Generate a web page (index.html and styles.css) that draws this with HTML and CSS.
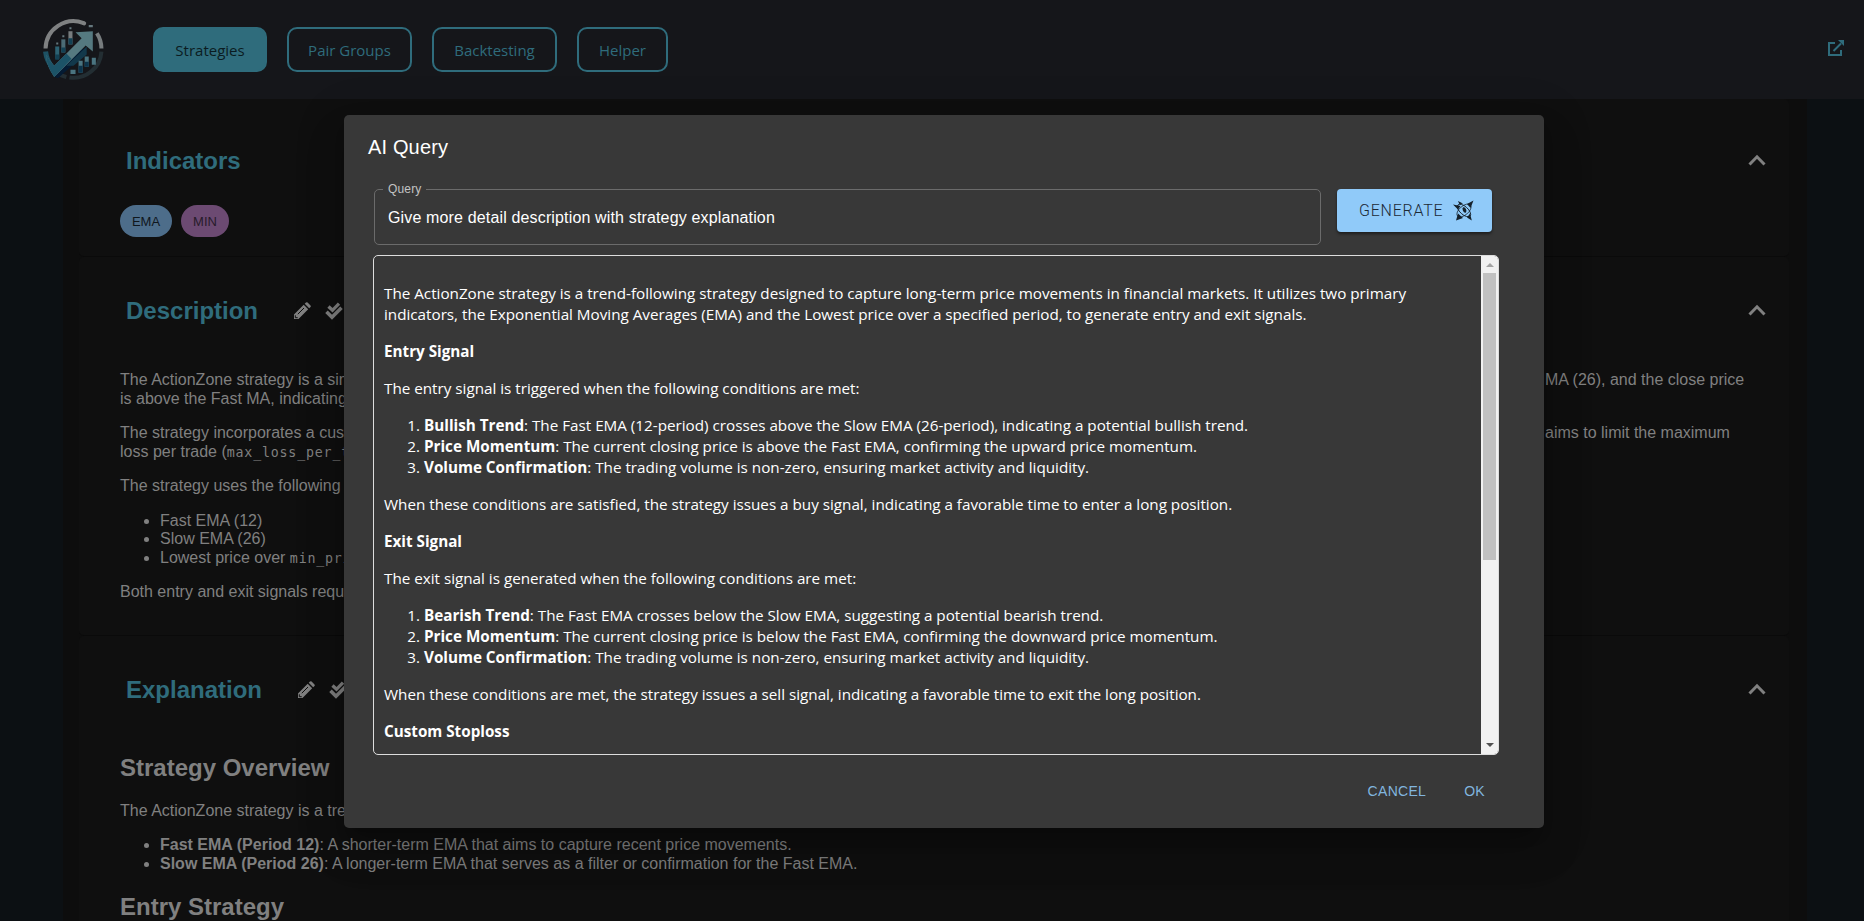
FILE: index.html
```html
<!DOCTYPE html>
<html lang="en">
<head>
<meta charset="utf-8">
<title>Strategies</title>
<link rel="stylesheet" href="styles.css">
</head>
<body>
<svg class="defs" width="0" height="0">
  <symbol id="chevron" viewBox="0 0 18 12"><path d="M1.500 10.500 9 2.800l7.500 7.700" fill="none" stroke="#808080" stroke-width="3"/></symbol>
  <symbol id="pencil" viewBox="0 0 18 18"><path fill="#808080" d="M1 12.500 10.700 2.800l4.500 4.500L5.500 17H1zM11.700 1.800l1.300-1.300q.8-.6 1.600 0l2.900 2.900q.6.800 0 1.600l-1.300 1.300z"/><path d="m4.800 12.200 6.200-6.200" stroke="#0f0f0f" stroke-width="1"/><path d="M2.300 13.300v2.400h2.400" fill="none" stroke="#0f0f0f" stroke-width="1"/></symbol>
  <symbol id="checks" viewBox="0 0 18 18"><path d="m3.500 4.500 4 3.800L14 1.700" fill="none" stroke="#808080" stroke-width="3.300"/><path d="m1.500 9.700 5.500 5.600 9.500-9.500" fill="none" stroke="#808080" stroke-width="3.500"/></symbol>
</svg>
<div class="app">
  <header class="topbar">
    <svg class="logo" viewBox="0 0 60 62">
      <g fill="none" stroke-width="4">
        <path d="M2.500 30A27.500 27.500 0 0 1 40 5" stroke="#7f8182"/>
        <path d="M40 5l.5.200" stroke="#7f8182" stroke-linecap="round"/>
        <path d="M53 15a27.500 27.500 0 0 1 4.500 15" stroke="#777c7e"/>
        <path d="M2.500 33q1 9 7 16" stroke="#1d5163" stroke-width="5"/>
        <path d="M57.500 33A27.500 27.500 0 0 1 26 58.500M23 58q-4-1-6-2" stroke="#232e33"/>
      </g>
      <path d="M12 28h4v12h-4z" fill="#2d6273"/><path d="M18 21h4v13h-4z" fill="#4b6b75"/><path d="M25 13h4v13h-4z" fill="#777c7e"/>
      <path d="M13 24h2v2h-2zM19 17h2v2h-2zM26 9h2v2h-2zM45 7h4v2h-4z" fill="#65777d"/>
      <path d="M12 36h4v5h-4zM18 29h4v5h-4zM25 20h4v6h-4z" fill="#134154"/>
      <path d="m12 55 27-25 4 4-28 25q-4 0-3-4z" fill="#041b33"/>
      <path d="M23 47 43 28v8L30 47z" fill="#12384b"/>
      <path d="M3 36q3 6 8 11l27-27-6-6 17-1v20l-7-6-31 31Q3 47 3 36z" fill="#557980"/>
      <path d="M3 36q3 6 8 11l12-12 5 5-17 18Q3 47 3 36z" fill="#1c5367"/>
      <path d="M27 51h5v4h-5zM35 42h4v12h-4zM41 38h4v10h-4zM48 39h4v7h-4z" fill="#4a7480"/>
      <path d="M35 47h4v7h-4zM41 43h4v5h-4z" fill="#0c344c"/>
    </svg>
    <nav class="nav">
      <a class="tab tab-active">Strategies</a>
      <a class="tab tab-groups">Pair Groups</a>
      <a class="tab tab-back">Backtesting</a>
      <a class="tab tab-helper">Helper</a>
    </nav>
    <svg class="external" viewBox="0 0 18 18" fill="none" stroke="#2f6c7c" stroke-width="2"><path d="M8 4H2v12h12v-5M6.500 12 14 4.500"/><path d="M11 1h6v6z" fill="#2f6c7c" stroke="none"/></svg>
  </header>
  <main class="content">
    <section class="card card-indicators">
      <div class="card-head"><h2>Indicators</h2><svg class="chevron"><use href="#chevron"/></svg></div>
      <div class="chips"><span class="chip chip-ema">EMA</span><span class="chip chip-min">MIN</span></div>
    </section>
    <section class="card card-description">
      <div class="card-head"><h2>Description</h2><svg class="tool pencil"><use href="#pencil"/></svg><svg class="tool checks"><use href="#checks"/></svg><svg class="chevron"><use href="#chevron"/></svg></div>
      <div class="prose">
        <div class="split"><p>The ActionZone strategy is a simple<br>is above the Fast MA, indicating</p><p>MA (26), and the close price</p></div>
        <div class="split"><p>The strategy incorporates a custom<br>loss per trade (<code>max_loss_per_trade</code>)</p><p>aims to limit the maximum</p></div>
        <p>The strategy uses the following</p>
        <ul><li>Fast EMA (12)</li><li>Slow EMA (26)</li><li>Lowest price over <code>min_price</code></li></ul>
        <p>Both entry and exit signals require</p>
      </div>
    </section>
    <section class="card card-explanation">
      <div class="card-head"><h2>Explanation</h2><svg class="tool pencil"><use href="#pencil"/></svg><svg class="tool checks"><use href="#checks"/></svg><svg class="chevron"><use href="#chevron"/></svg></div>
      <div class="prose">
        <h3>Strategy Overview</h3>
        <p>The ActionZone strategy is a trend</p>
        <ul><li><b>Fast EMA (Period 12)</b>: A shorter-term EMA that aims to capture recent price movements.</li><li><b>Slow EMA (Period 26)</b>: A longer-term EMA that serves as a filter or confirmation for the Fast EMA.</li></ul>
        <h3>Entry Strategy</h3>
      </div>
    </section>
  </main>
</div>
<div class="dialog">
  <h1>AI Query</h1>
  <div class="query-row">
    <fieldset class="query"><legend>Query</legend><span>Give more detail description with strategy explanation</span></fieldset>
    <button class="generate"><span>GENERATE</span>
      <svg class="star" viewBox="0 0 22 22"><path fill="#15202a" d="M0 4.500 7.500 6 5 9.500zM5 1l5 2.500-3.500 1zM20.500.500 17.500 8l-3.500-4zM18.800 20.500 14 17.500l3-4zM3 20.500 5 13.500l5 4.500z"/><g fill="none" stroke="#15202a"><ellipse cx="11" cy="10.500" rx="8.200" ry="4" transform="rotate(42 11 10.500)" stroke-width=".9"/><ellipse cx="11" cy="10.500" rx="8.500" ry="4.500" transform="rotate(-40 11 10.500)" stroke-width=".7"/></g><ellipse cx="11.500" cy="10" rx="1.700" ry="2.900" transform="rotate(-25 11.500 10)" fill="#15202a"/></svg>
    </button>
  </div>
  <div class="answer">
    <div class="answer-text">
      <p>The ActionZone strategy is a trend-following strategy designed to capture long-term price movements in financial markets. It utilizes two primary<br>indicators, the Exponential Moving Averages (EMA) and the Lowest price over a specified period, to generate entry and exit signals.</p>
      <p><b>Entry Signal</b></p>
      <p>The entry signal is triggered when the following conditions are met:</p>
      <ol><li><b>Bullish Trend</b>: The Fast EMA (12-period) crosses above the Slow EMA (26-period), indicating a potential bullish trend.</li><li><b>Price Momentum</b>: The current closing price is above the Fast EMA, confirming the upward price momentum.</li><li><b>Volume Confirmation</b>: The trading volume is non-zero, ensuring market activity and liquidity.</li></ol>
      <p>When these conditions are satisfied, the strategy issues a buy signal, indicating a favorable time to enter a long position.</p>
      <p><b>Exit Signal</b></p>
      <p>The exit signal is generated when the following conditions are met:</p>
      <ol><li><b>Bearish Trend</b>: The Fast EMA crosses below the Slow EMA, suggesting a potential bearish trend.</li><li><b>Price Momentum</b>: The current closing price is below the Fast EMA, confirming the downward price momentum.</li><li><b>Volume Confirmation</b>: The trading volume is non-zero, ensuring market activity and liquidity.</li></ol>
      <p>When these conditions are met, the strategy issues a sell signal, indicating a favorable time to exit the long position.</p>
      <p><b>Custom Stoploss</b></p>
    </div>
    <div class="scrollbar"><i class="up"></i><i class="thumb"></i><i class="down"></i></div>
  </div>
  <div class="actions"><a class="cancel">CANCEL</a><a class="ok">OK</a></div>
</div>
</body>
</html>
```
FILE: styles.css
```css
* { box-sizing: border-box; }
html, body { margin: 0; height: 100%; overflow: hidden; }
body { background: #0c1013; font-family: "Liberation Sans", Arial, sans-serif; }
.defs { position: absolute; }
.app { height: 921px; overflow: hidden; }
.topbar { height: 99px; background: #15161a; display: flex; align-items: flex-start; padding: 0 19px 0 43px; }
.logo { width: 61px; height: 63px; margin-top: 18px; }
.nav { display: flex; gap: 20px; margin: 27px 0 0 49px; font: 15px "Open Sans", sans-serif; }
.tab { height: 45px; border: 2px solid #2f6c7c; border-radius: 10px; color: #2f6c7c; display: flex; align-items: center; justify-content: center; white-space: nowrap; width: 114px; padding-top: 1px; }
.tab-active { background: #2f6c7c; color: #0b1c22; }
.tab-groups, .tab-back { width: 125px; }
.tab-helper { width: 91px; }
.external { width: 18px; height: 18px; margin: 39px 0 0 auto; }
.content { width: 1744px; height: 822px; margin-left: 63px; padding: 0 18px 0 16px; background: #0d0d0d; overflow: hidden; }
.card { background: #0f0f0f; border-bottom: 1px solid #0a0a0a; border-radius: 5px; padding: 0 23px 0 41px; }
.card-indicators { height: 158px; }
.card-description { height: 379px; }
.card-explanation { height: 420px; }
.card-head { height: 98px; display: flex; align-items: center; padding: 10px 0 0 6px; }
.card-indicators .card-head { height: 106px; padding-top: 18px; }
h2 { margin: 0; color: #2f6c7c; font-size: 24px; line-height: 28px; }
.tool { width: 18px; height: 18px; margin-left: 35px; }
.checks { margin-left: 14px; }
.chevron { width: 18px; height: 12px; margin: 0 0 2px auto; }
.chips { display: flex; gap: 9px; }
.chip { height: 32px; width: 52px; border-radius: 16px; background: #4d6d8a; color: #10171d; font-size: 13px; display: grid; place-items: center; }
.chip-min { width: 48px; background: #6c4a72; color: #271a2a; }
.prose { display: flow-root; color: #808080; font-size: 16px; line-height: 18.500px; white-space: nowrap; }
.prose p { margin: 16px 0; }
.prose code { font: 13.300px/16px "DejaVu Sans Mono", monospace; letter-spacing: .8px; }
.split { display: grid; grid-template-columns: 1425px auto; margin: 16px 0; }
.split p { margin: 0; }
ul, ol { margin: 16px 0; padding-left: 40px; }
h3 { margin: 20px 0; font-size: 24px; line-height: 27.500px; }
.dialog { position: absolute; left: 344px; top: 115px; width: 1200px; height: 713px; background: #383838; border-radius: 5px; color: #fff; box-shadow: 0 11px 15px -7px #0003, 0 24px 38px 3px #00000024, 0 9px 46px 8px #0000001f; padding: 0 45px 0 29px; }
h1 { font-size: 20px; font-weight: 400; letter-spacing: .15px; margin: 0 0 0 -5px; padding-top: 20px; line-height: 24px; height: 67px; }
.query-row { display: flex; align-items: flex-start; gap: 16px; padding-left: 1px; height: 73px; }
.query { width: 947px; height: 63px; margin: 0; border: 1px solid #6b6b6b; border-radius: 5px; padding: 0 13px; min-width: 0; }
.query legend { font-size: 12px; letter-spacing: .15px; color: #c3c3c3; padding: 0 5px; margin-left: -5px; line-height: 14px; height: 14px; }
.query span { display: block; font-size: 16px; letter-spacing: .15px; line-height: 20px; padding-top: 12px; white-space: nowrap; }
.generate { width: 155px; height: 43px; margin-top: 7px; border: 0; border-radius: 4px; background: #90caf9; color: #1c2935; box-shadow: 0 2px 3px #0007; font: 300 16px/20px Roboto, sans-serif; letter-spacing: .75px; display: flex; align-items: center; padding: 0 17px 0 22px; justify-content: space-between; }
.star { width: 22px; height: 22px; }
.answer { width: 1126px; height: 500px; border: 1px solid #ddd; border-radius: 5px; display: flex; overflow: hidden; }
.answer-text { flex: 1; padding: 11px 10px; font: 15.250px/21px "Open Sans", sans-serif; letter-spacing: -.015px; white-space: nowrap; overflow: hidden; }
.answer-text p { margin: 16px 0; }
.scrollbar { width: 17px; background: #f1f1f1; display: flex; flex-direction: column; align-items: center; }
.up { border: 4px solid transparent; border-bottom-color: #a3a3a3; border-top: 0; margin-top: 7px; height: 4px; width: 8px; }
.thumb { width: 13px; height: 287px; background: #c1c1c1; margin-top: 6px; }
.down { border: 4px solid transparent; border-top-color: #505050; border-bottom: 0; margin: auto 0 7px; }
.actions { display: flex; justify-content: flex-end; gap: 38px; color: #81b5df; font-size: 14px; letter-spacing: .3px; padding: 26px 14px 0 0; line-height: 20px; }
```
